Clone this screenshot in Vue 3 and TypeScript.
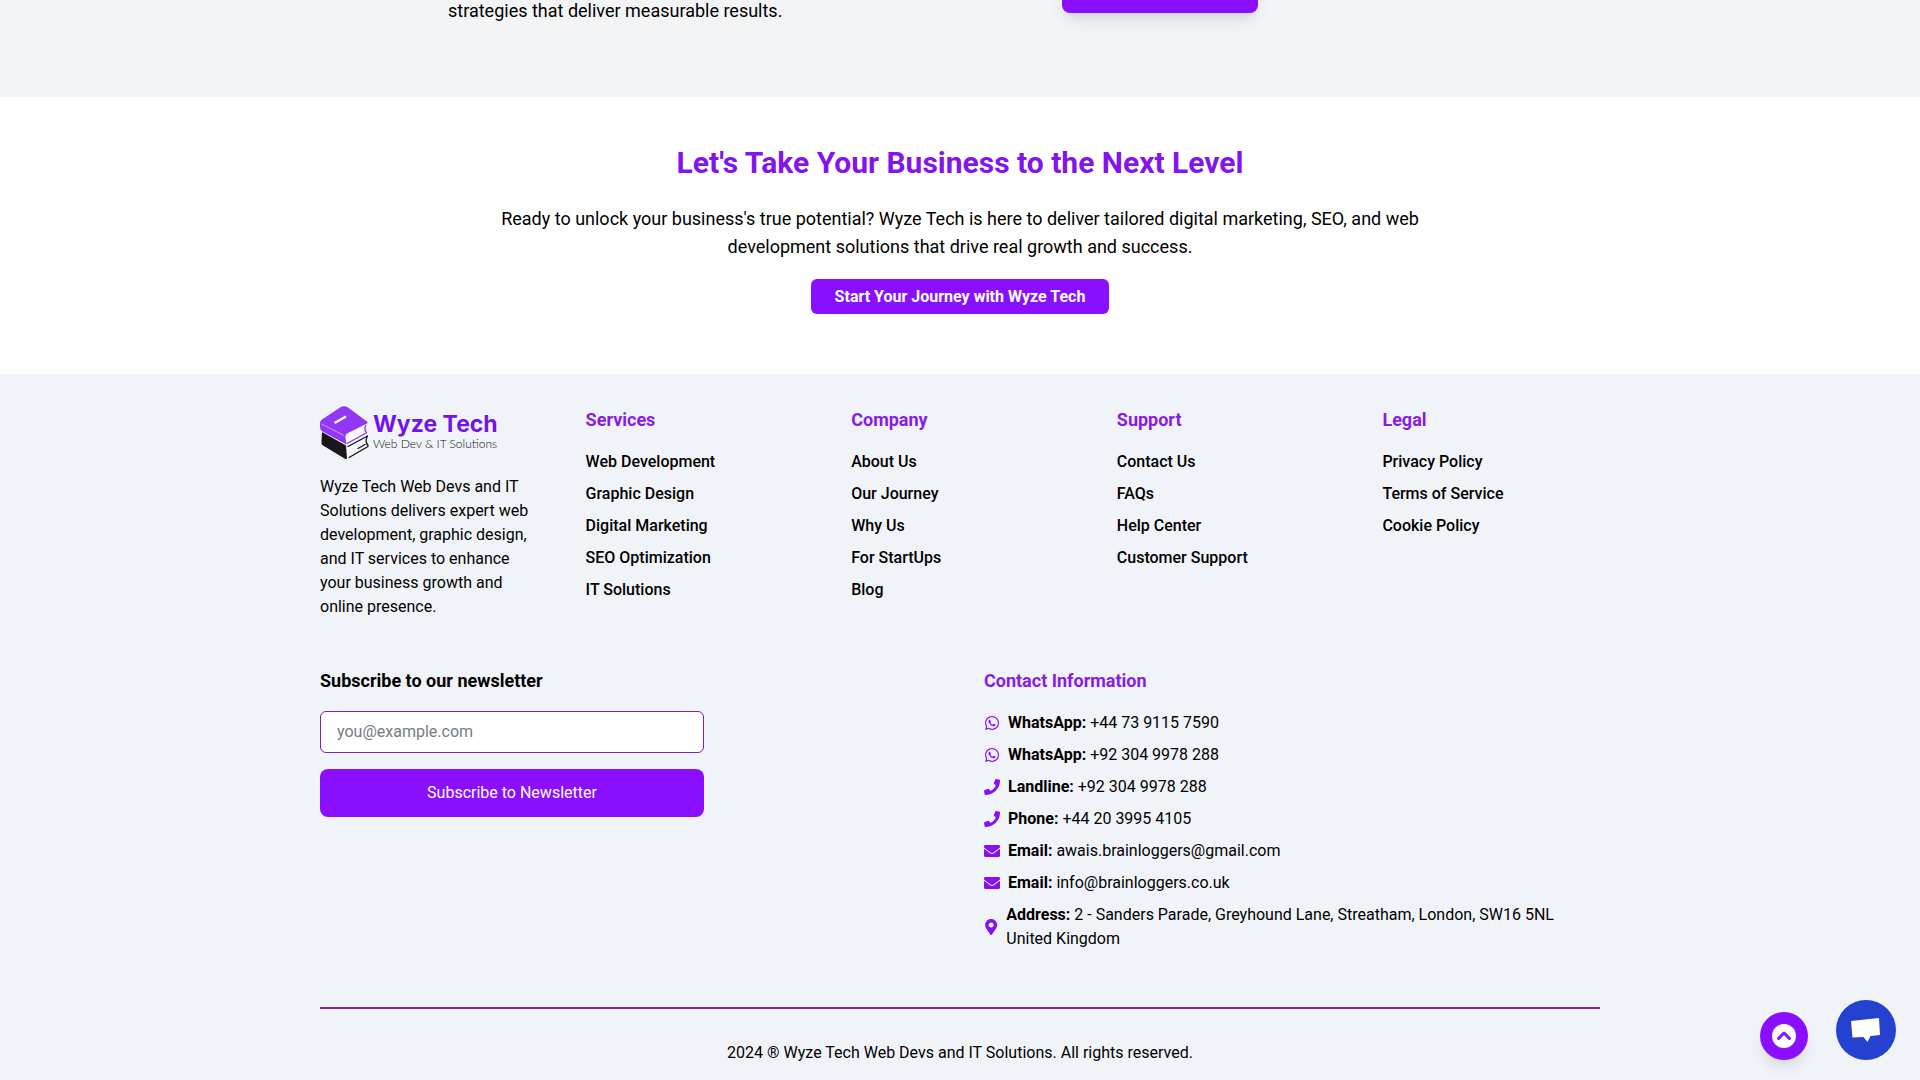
<script setup lang="ts">
import { ref } from 'vue'

interface LinkGroup {
  title: string
  links: string[]
}

interface ContactItem {
  icon: 'whatsapp' | 'phone' | 'mail' | 'pin'
  label: string
  value: string
}

const email = ref('')

const groups: LinkGroup[] = [
  {
    title: 'Services',
    links: ['Web Development', 'Graphic Design', 'Digital Marketing', 'SEO Optimization', 'IT Solutions'],
  },
  { title: 'Company', links: ['About Us', 'Our Journey', 'Why Us', 'For StartUps', 'Blog'] },
  { title: 'Support', links: ['Contact Us', 'FAQs', 'Help Center', 'Customer Support'] },
  { title: 'Legal', links: ['Privacy Policy', 'Terms of Service', 'Cookie Policy'] },
]

const contacts: ContactItem[] = [
  { icon: 'whatsapp', label: 'WhatsApp:', value: '+44 73 9115 7590' },
  { icon: 'whatsapp', label: 'WhatsApp:', value: '+92 304 9978 288' },
  { icon: 'phone', label: 'Landline:', value: '+92 304 9978 288' },
  { icon: 'phone', label: 'Phone:', value: '+44 20 3995 4105' },
  { icon: 'mail', label: 'Email:', value: 'awais.brainloggers@gmail.com' },
  { icon: 'mail', label: 'Email:', value: 'info@brainloggers.co.uk' },
  {
    icon: 'pin',
    label: 'Address:',
    value: '2 - Sanders Parade, Greyhound Lane, Streatham, London, SW16 5NL United Kingdom',
  },
]

const icons: Record<ContactItem['icon'], { box: string; d: string }> = {
  whatsapp: {
    box: '0 0 448 512',
    d: 'M380.9 97.1C339 55.1 283.2 32 223.9 32c-122.4 0-222 99.6-222 222 0 39.1 10.2 77.3 29.6 111L0 480l117.7-30.9c32.4 17.7 68.9 27 106.1 27h.1c122.3 0 224.1-99.6 224.1-222 0-59.3-25.2-115-67.1-157zm-157 341.6c-33.2 0-65.7-8.9-94-25.7l-6.7-4-69.8 18.3L72 359.2l-4.4-7c-18.5-29.4-28.2-63.3-28.2-98.2 0-101.7 82.8-184.5 184.6-184.5 49.3 0 95.6 19.2 130.4 54.1 34.8 34.9 56.2 81.2 56.1 130.5 0 101.8-84.9 184.6-186.6 184.6zm101.2-138.2c-5.5-2.8-32.8-16.2-37.9-18-5.1-1.9-8.8-2.8-12.5 2.8-3.7 5.6-14.3 18-17.6 21.8-3.2 3.7-6.5 4.2-12 1.4-32.6-16.3-54-29.1-75.5-66-5.7-9.8 5.7-9.1 16.3-30.3 1.8-3.7.9-6.9-.5-9.7-1.4-2.8-12.5-30.1-17.1-41.2-4.5-10.8-9.1-9.3-12.5-9.5-3.2-.2-6.9-.2-10.6-.2-3.7 0-9.7 1.4-14.8 6.9-5.1 5.6-19.4 19-19.4 46.3 0 27.3 19.9 53.7 22.6 57.4 2.8 3.7 39.1 59.7 94.8 83.8 35.2 15.2 49 16.5 66.6 13.9 10.7-1.6 32.8-13.4 37.4-26.4 4.6-13 4.6-24.1 3.2-26.4-1.3-2.5-5-3.9-10.5-6.6z',
  },
  phone: {
    box: '0 0 512 512',
    d: 'M493.4 24.6l-104-24c-11.3-2.6-22.9 3.3-27.5 13.9l-48 112c-4.2 9.8-1.4 21.3 6.9 28l60.6 49.6c-36 76.7-98.9 140.5-177.2 177.2l-49.6-60.6c-6.8-8.3-18.2-11.1-28-6.9l-112 48C3.9 366.5-2 378.1.6 389.4l24 104C27.1 504.2 36.7 512 48 512c256.1 0 464-207.5 464-464 0-11.2-7.7-20.9-18.6-23.4z',
  },
  mail: {
    box: '0 0 512 512',
    d: 'M502.3 190.8c3.9-3.1 9.7-.2 9.7 4.7V400c0 26.5-21.5 48-48 48H48c-26.5 0-48-21.5-48-48V195.6c0-5 5.7-7.8 9.7-4.7 22.4 17.4 52.1 39.5 154.1 113.6 21.1 15.4 56.7 47.8 92.2 47.6 35.7.3 72-32.8 92.3-47.6 102-74.1 131.6-96.3 154-113.7zM256 320c23.2.4 56.6-29.2 73.4-41.4 132.7-96.3 142.8-104.7 173.4-128.7 5.8-4.5 9.2-11.5 9.2-18.9v-19c0-26.5-21.5-48-48-48H48c-26.5 0-48 21.5-48 48v19c0 7.4 3.4 14.3 9.2 18.9 30.6 23.9 40.7 32.4 173.4 128.7 16.8 12.2 50.2 41.8 73.4 41.4z',
  },
  pin: {
    box: '0 0 384 512',
    d: 'M172.268 501.67C26.97 291.031 0 269.413 0 192 0 85.961 85.961 0 192 0s192 85.961 192 192c0 77.413-26.97 99.031-172.268 309.67-9.535 13.774-29.93 13.773-39.464 0zM192 272c44.183 0 80-35.817 80-80s-35.817-80-80-80-80 35.817-80 80 35.817 80 80 80z',
  },
}

function scrollToTop(): void {
  window.scrollTo({ top: 0, behavior: 'smooth' })
}
</script>

<template>
  <div class="page">
    <section class="intro">
      <div class="intro-row">
        <p class="lead">strategies that deliver measurable results.</p>
        <button class="intro-button" type="button" aria-label="Get started"></button>
      </div>
    </section>

    <section class="cta">
      <h2>Let's Take Your Business to the Next Level</h2>
      <p class="lead">
        Ready to unlock your business's true potential? Wyze Tech is here to deliver tailored digital
        marketing, SEO, and web development solutions that drive real growth and success.
      </p>
      <a class="cta-link" href="#">Start Your Journey with Wyze Tech</a>
    </section>

    <footer class="footer">
      <div class="container">
        <div class="columns">
          <div>
            <a class="logo" href="#">
              <svg class="logo-mark" viewBox="0 0 49 54" aria-hidden="true">
                <path d="M2 26 L26 39.500 L27 52.500 Q26 53.500 24.500 52.500 L3 39.500 Q1 38 1.500 35 Z" fill="#19161c" />
                <path d="M27 40 L47 29 L49 30 L46 35 L48.500 40 L29 51.500 L27 52.500 Z" fill="#f7f7fb" />
                <path d="M28 40.500 L47.500 30 M47.500 30 Q44.500 35 48 39.500 M29 51.500 L48 40.500 M38 42.500 L45 38.500" fill="none" stroke="#19161c" stroke-width="1.400" stroke-linecap="round" />
                <path d="M25 29 L47 18 Q44.500 23 47 27 L26 38 Z" fill="#fbf9ff" />
                <path d="M27 37.500 L47 26.500 M46 19 Q43.500 23 46.500 27" fill="none" stroke="#9238f5" stroke-width="1.400" />
                <path d="M0 17 Q0 14.500 2 13.500 L20 1.500 Q24 -1 28 1.500 L47 15.500 Q48 16.500 47 17.500 L27 27.500 Q25 29 25.500 32 L26.500 38.500 L2.500 25.500 Q0 24 0 21 Z" fill="#9238f5" />
                <path d="M1.500 18 L24 29.500" stroke="#c99bff" stroke-width="1" />
                <path d="M14.500 17 L26 10.500" stroke="#fff" stroke-width="2.400" />
              </svg>
              <span class="logo-words">
                <span class="logo-name">Wyze Tech</span>
                <span class="logo-tag">Web Dev &amp; IT Solutions</span>
              </span>
            </a>
            <p class="about">
              Wyze Tech Web Devs and IT Solutions delivers expert web development, graphic design, and IT
              services to enhance your business growth and online presence.
            </p>
          </div>
          <nav v-for="group in groups" :key="group.title" :aria-label="group.title">
            <h3>{{ group.title }}</h3>
            <ul class="list">
              <li v-for="link in group.links" :key="link">
                <a class="nav-link" href="#">{{ link }}</a>
              </li>
            </ul>
          </nav>
        </div>

        <div class="halves">
          <form class="newsletter" @submit.prevent>
            <label for="newsletter-email">Subscribe to our newsletter</label>
            <input id="newsletter-email" v-model="email" type="email" placeholder="you@example.com" />
            <button type="submit">Subscribe to Newsletter</button>
          </form>
          <div>
            <h3>Contact Information</h3>
            <ul class="list">
              <li v-for="(item, index) in contacts" :key="index" class="contact">
                <svg class="contact-icon" :viewBox="icons[item.icon].box" aria-hidden="true">
                  <path :d="icons[item.icon].d" fill="currentColor" />
                </svg>
                <span><strong>{{ item.label }}</strong> {{ item.value }}</span>
              </li>
            </ul>
          </div>
        </div>

        <p class="copyright">2024 ® Wyze Tech Web Devs and IT Solutions. All rights reserved.</p>
      </div>
    </footer>

    <div class="floating">
      <button class="to-top" type="button" aria-label="Back to top" @click="scrollToTop">
        <svg viewBox="0 0 24 24" width="24" height="24" aria-hidden="true">
          <circle cx="12" cy="12" r="12" fill="#fff" />
          <path d="M6.500 14.500 L12 9 L17.500 14.500" fill="none" stroke="#8a0fff" stroke-width="3" stroke-linecap="round" stroke-linejoin="round" />
        </svg>
      </button>
      <button class="chat" type="button" aria-label="Open chat">
        <svg viewBox="0 0 30 26" width="30" height="26" aria-hidden="true">
          <path d="M0 4 L28 1 L29 18 L19.500 19 L16.500 25 L12.500 20 L1.500 20.500 Z" fill="#fff" />
        </svg>
      </button>
    </div>
  </div>
</template>

<style>
body {
  margin: 0;
  background: #f0f4f9;
}
</style>

<style scoped>
.page {
  overflow: hidden;
  font-family: Roboto, 'Liberation Sans', sans-serif;
  font-size: 16px;
  line-height: 24px;
  color: #000;
}

h2,
h3,
p,
ul {
  margin: 0;
  padding: 0;
}

a {
  color: inherit;
  text-decoration: none;
}

button,
input {
  box-sizing: border-box;
  font: inherit;
}

button {
  border: 0;
  padding: 0;
  cursor: pointer;
}

.lead {
  font-size: 18px;
  line-height: 28px;
}

/* The top of this section is scrolled out of view. */
.intro {
  margin-top: -35px;
  padding-bottom: 72px;
  background: #f3f4f6;
}

.intro-row {
  display: grid;
  grid-template-columns: 3fr 2fr;
  align-items: end;
  max-width: 1024px;
  margin: 0 auto;
}

.intro-button {
  width: 196px;
  height: 48px;
  margin-bottom: 12px;
  border-radius: 8px;
  background: #8a0fff;
  box-shadow: 0 10px 15px -3px rgba(0, 0, 0, 0.1), 0 4px 6px -4px rgba(0, 0, 0, 0.1);
}

.cta {
  padding: 48px 16px 65px;
  background: #fff;
  text-align: center;
}

.cta h2 {
  margin-bottom: 24px;
  font-size: 30px;
  line-height: 36px;
  font-weight: 700;
  color: #8414ee;
}

.cta .lead {
  max-width: 960px;
  margin: 0 auto 24px;
}

.cta-link {
  padding: 8px 24px;
  border-radius: 6px;
  background: #8a0fff;
  color: #fff;
  font-weight: 700;
}

.footer {
  padding: 32px 16px 16px;
  background: #f0f4f9;
}

.container {
  max-width: 1280px;
  margin: 0 auto;
}

.columns {
  display: grid;
  grid-template-columns: repeat(5, 1fr);
  gap: 48px;
}

.halves {
  display: grid;
  grid-template-columns: 1fr 1fr;
  gap: 48px;
  margin-top: 48px;
}

h3 {
  margin-bottom: 16px;
  font-size: 18px;
  line-height: 28px;
  font-weight: 700;
  color: #8a1be6;
}

.list {
  display: flex;
  flex-direction: column;
  gap: 8px;
  list-style: none;
}

.nav-link {
  font-weight: 500;
}

.logo {
  display: flex;
  align-items: center;
  gap: 4px;
  height: 53px;
  margin-bottom: 16px;
}

.logo-mark {
  width: 49px;
  height: 54px;
  flex: none;
}

.logo-words {
  display: flex;
  flex-direction: column;
  padding-bottom: 2px;
  white-space: nowrap;
}

.logo-name {
  font-family: Inter, sans-serif;
  font-size: 23px;
  line-height: 24px;
  font-weight: 700;
  color: #7414e8;
}

.logo-tag {
  font-family: Lato, sans-serif;
  font-size: 12px;
  line-height: 16px;
  font-weight: 300;
  color: #111;
}

.newsletter {
  display: flex;
  flex-direction: column;
  max-width: 384px;
}

.newsletter label {
  margin-bottom: 16px;
  font-size: 18px;
  line-height: 28px;
  font-weight: 700;
}

.newsletter input {
  height: 42px;
  margin-bottom: 16px;
  padding: 7px 16px 9px;
  border: 1px solid #7e22a8;
  border-radius: 6px;
  background: #fff;
}

.newsletter input::placeholder {
  color: #757b85;
  opacity: 1;
}

.newsletter button {
  height: 48px;
  border-radius: 8px;
  background: #8a0fff;
  color: #fff;
  font-weight: 400;
}

.contact {
  display: flex;
  align-items: center;
}

.contact-icon {
  width: 16px;
  height: 16px;
  margin-right: 8px;
  color: #8410f5;
}

.contact strong {
  font-weight: 700;
}

.copyright {
  margin-top: 56px;
  padding-top: 32px;
  border-top: 2px solid #7e22a8;
  text-align: center;
}

.floating {
  position: fixed;
  right: 24px;
  bottom: 20px;
  display: flex;
  align-items: flex-end;
  gap: 28px;
}

.floating button {
  display: grid;
  place-items: center;
  border-radius: 50%;
}

.to-top {
  width: 48px;
  height: 48px;
  background: #8a0fff;
  box-shadow: 0 10px 15px -3px rgba(0, 0, 0, 0.1), 0 4px 6px -4px rgba(0, 0, 0, 0.1);
}

.chat {
  width: 60px;
  height: 60px;
  background: #2541cf;
}
</style>
